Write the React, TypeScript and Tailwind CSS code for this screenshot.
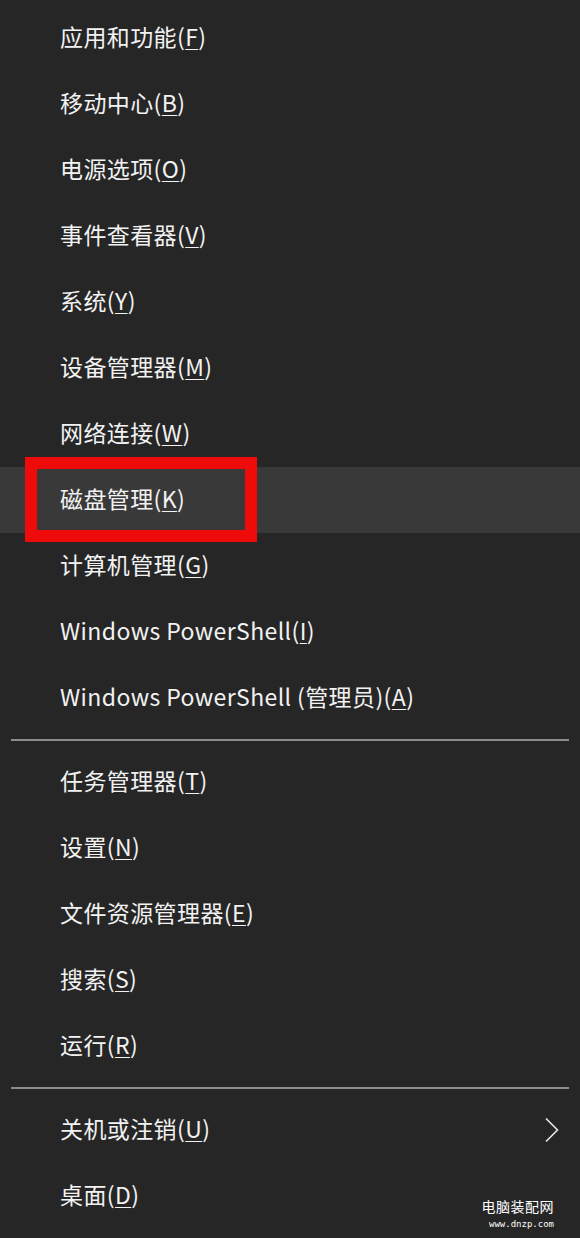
import React from 'react';

type Item = { label: string; key: string; sub?: boolean; active?: boolean };

const groupA: Item[] = [
  { label: '应用和功能', key: 'F' },
  { label: '移动中心', key: 'B' },
  { label: '电源选项', key: 'O' },
  { label: '事件查看器', key: 'V' },
  { label: '系统', key: 'Y' },
  { label: '设备管理器', key: 'M' },
  { label: '网络连接', key: 'W' },
  { label: '磁盘管理', key: 'K', active: true },
  { label: '计算机管理', key: 'G' },
  { label: 'Windows PowerShell', key: 'I' },
  { label: 'Windows PowerShell (管理员)', key: 'A' },
];

const groupB: Item[] = [
  { label: '任务管理器', key: 'T' },
  { label: '设置', key: 'N' },
  { label: '文件资源管理器', key: 'E' },
  { label: '搜索', key: 'S' },
  { label: '运行', key: 'R' },
];

const groupC: Item[] = [
  { label: '关机或注销', key: 'U', sub: true },
  { label: '桌面', key: 'D' },
];

const MenuRow = ({ item }: { item: Item }) => (
  <div className={`relative flex h-[66px] items-center pb-[3px] pl-[60px] pr-[20px] ${item.active ? 'bg-[#393939]' : ''}`}>
    {item.active && (
      <div className="absolute left-[25px] top-[-10px] h-[85px] w-[232px] border-[12px] border-[#f00b0b]" />
    )}
    <span className="relative text-[23px] leading-none tracking-[0.4px] text-[#f2f2f2]">
      {item.label}(<span className="underline decoration-1 underline-offset-[3px]">{item.key}</span>)
    </span>
    {item.sub && (
      <svg className="ml-auto mt-[3px]" width="16" height="26" viewBox="0 0 16 26" fill="none">
        <path d="M2 1.5 L13.5 13 L2 24.5" stroke="#e8e8e8" strokeWidth="1.6" />
      </svg>
    )}
  </div>
);

const Divider = () => (
  <div className="flex h-[18px] items-center px-[11px]">
    <div className="h-[2px] w-full bg-[#8c8c8c]" />
  </div>
);

export default function App() {
  return (
    <div
      className="relative h-[1238px] w-[580px] overflow-hidden bg-[#262626] pt-[5px]"
      style={{ fontFamily: '"Noto Sans CJK SC", "Noto Sans", sans-serif' }}
    >
      {groupA.map((it) => (
        <MenuRow key={it.key} item={it} />
      ))}
      <Divider />
      {groupB.map((it) => (
        <MenuRow key={it.key} item={it} />
      ))}
      <Divider />
      {groupC.map((it) => (
        <MenuRow key={it.key} item={it} />
      ))}

      <div className="absolute bottom-[9px] right-[26px] flex flex-col items-end text-white">
        <span className="text-[14px] leading-none tracking-[0.5px]">电脑装配网</span>
        <span className="mt-[7px] text-[9px] leading-none" style={{ fontFamily: '"DejaVu Sans Mono", monospace' }}>
          www.dnzp.com
        </span>
      </div>
    </div>
  );
}
